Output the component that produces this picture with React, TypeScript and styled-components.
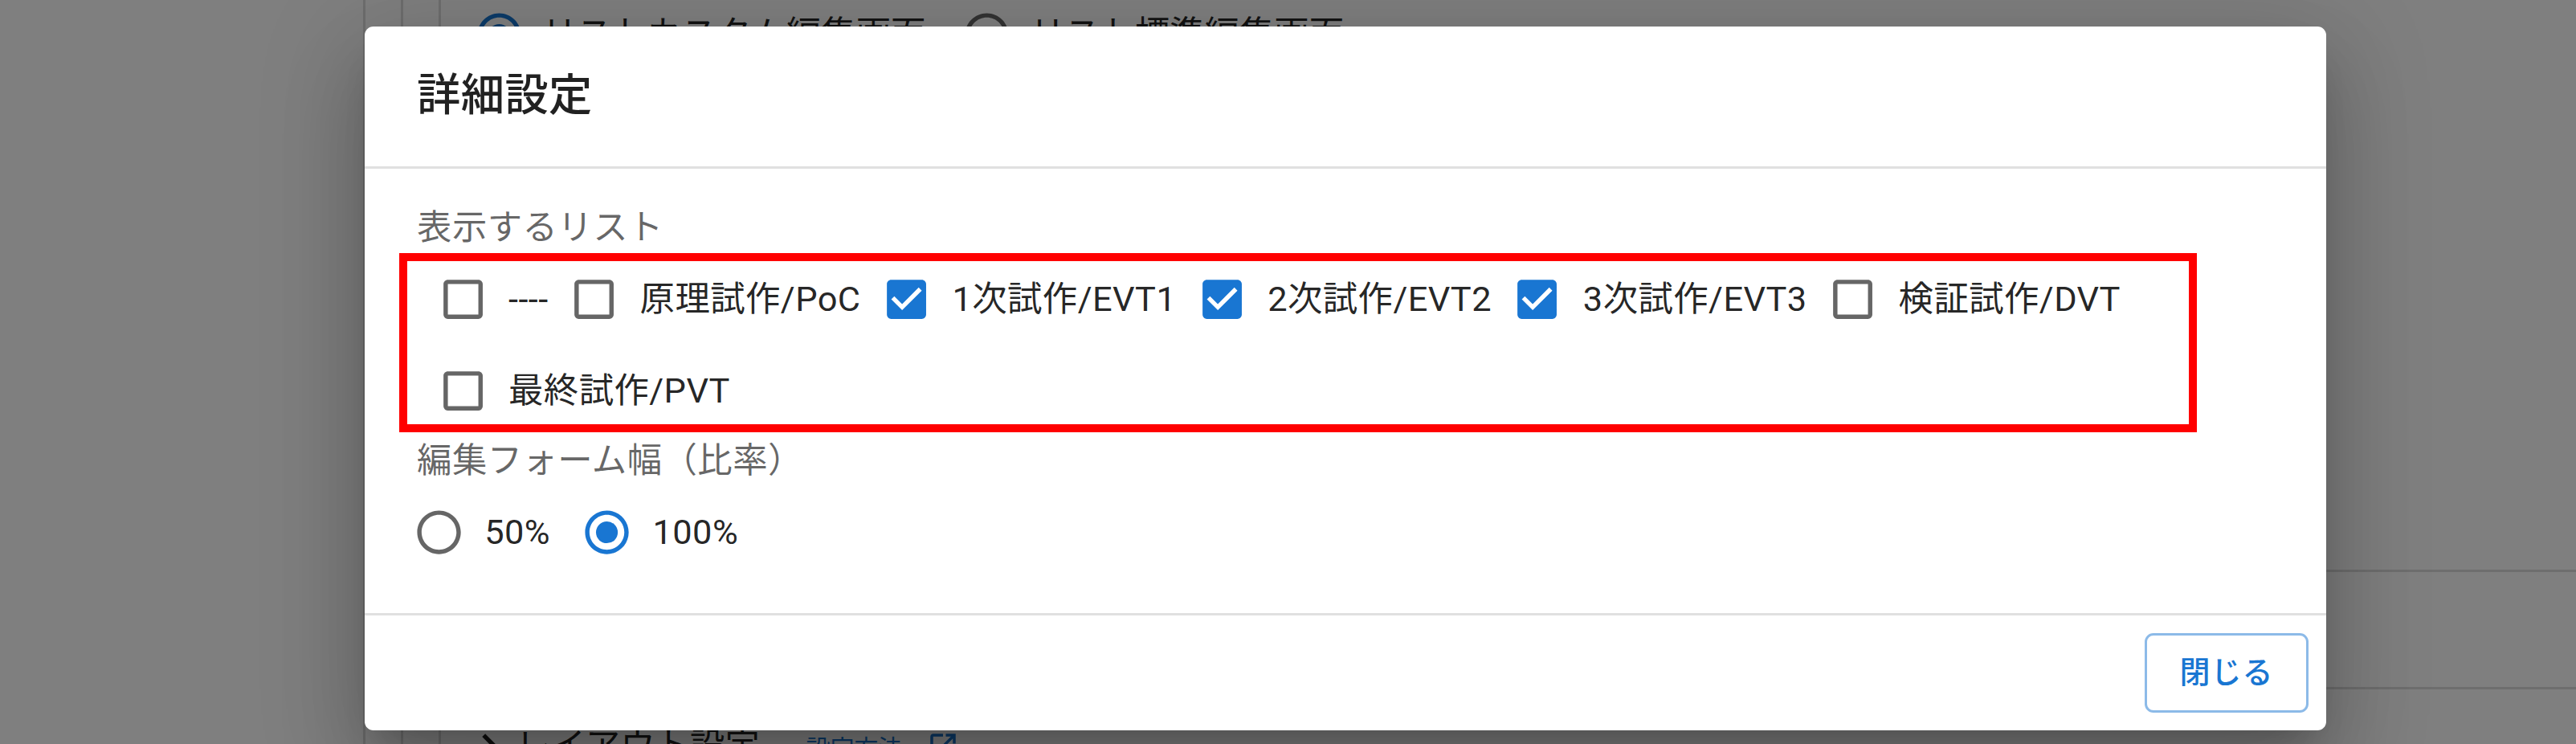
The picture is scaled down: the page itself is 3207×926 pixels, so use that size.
import React from "react";
import styled, { createGlobalStyle } from "styled-components";

const S = 2.713;
const u = (n: number) => `${(n * S).toFixed(2)}px`;

const FONT = `Roboto, "Noto Sans CJK JP", sans-serif`;
const BLUE = "#1976d2";

const GlobalStyle = createGlobalStyle`
  html, body { margin: 0; padding: 0; background: #fff; }
  body { width: 3207px; height: 926px; overflow: hidden; font-family: ${FONT}; }
  * { box-sizing: border-box; }
`;

/* ---------- background page ---------- */
const Page = styled.div`
  position: relative;
  width: 3207px;
  height: 926px;
  overflow: hidden;
  display: flex;
  background: #fff;
  font-family: ${FONT};
  color: rgba(0, 0, 0, 0.87);
`;

const SidePane = styled.div`
  flex: none;
  width: 455px;
  border-right: 3px solid #dcdcdc;
`;

const Guide = styled.div`
  flex: none;
  width: 47px;
  border-right: 3px solid #dcdcdc;
`;

const MainCol = styled.div`
  flex: 1;
  display: flex;
  flex-direction: column;
`;

const TopRow = styled.div`
  flex: none;
  height: 86px;
  display: flex;
  align-items: center;
  padding-left: 45px;
`;

const BgRadio = styled.span`
  display: inline-flex;
  margin-right: 26px;
  svg { width: 65px; height: 65px; display: block; margin: -5px; }
`;

const BgText = styled.span<{ $gap?: number }>`
  font-size: ${u(16)};
  line-height: 1.5;
  margin-right: ${(p) => p.$gap ?? 0}px;
`;

const Section = styled.div<{ $h: number }>`
  flex: none;
  height: ${(p) => p.$h}px;
  border-bottom: 3px solid #dcdcdc;
`;

const BottomRow = styled.div`
  flex: none;
  height: 142px;
  display: flex;
  align-items: center;
  padding-left: 28px;
  svg { display: block; }
`;

const BgHeading = styled.span`
  font-size: ${u(16)};
  line-height: 1.5;
  margin-left: 0px;
  margin-right: 58px;
`;

const BgLink = styled.span`
  font-size: ${u(11)};
  color: ${BLUE};
  margin-right: 30px;
`;

const Backdrop = styled.div`
  position: absolute;
  inset: 0;
  background: rgba(0, 0, 0, 0.5);
`;

/* ---------- dialog ---------- */
const Dialog = styled.div`
  position: absolute;
  left: 454px;
  top: 33px;
  width: 2442px;
  display: flex;
  flex-direction: column;
  background: #fff;
  border-radius: ${u(4)};
  box-shadow: 0 ${u(11)} ${u(15)} ${u(-7)} rgba(0, 0, 0, 0.2),
    0 ${u(24)} ${u(38)} ${u(3)} rgba(0, 0, 0, 0.14),
    0 ${u(9)} ${u(46)} ${u(8)} rgba(0, 0, 0, 0.12);
`;

const Title = styled.h2`
  margin: 0;
  padding: ${u(16)} ${u(24)};
  font-size: ${u(20)};
  font-weight: 500;
  line-height: 1.6;
  letter-spacing: 0.0075em;
  color: rgba(0, 0, 0, 0.87);
`;

const Content = styled.div`
  padding: ${u(16)} ${u(24)};
  border-top: 3px solid #e0e0e0;
  border-bottom: 3px solid #e0e0e0;
  display: flex;
  flex-direction: column;
`;

const FieldLabel = styled.div`
  font-size: ${u(16)};
  line-height: ${u(23)};
  letter-spacing: 0.00938em;
  color: rgba(0, 0, 0, 0.6);
`;

const CheckGroup = styled.div`
  position: relative;
  display: flex;
  flex-wrap: wrap;
  &::after {
    content: "";
    position: absolute;
    top: 0;
    left: -22px;
    right: 96px;
    bottom: 5px;
    border: 10px solid #ff0000;
    pointer-events: none;
  }
`;

const RadioGroup = styled.div`
  display: flex;
  flex-wrap: wrap;
`;

const Option = styled.label<{ $radio?: boolean }>`
  display: inline-flex;
  align-items: center;
  height: ${u(42)};
  margin-left: ${(p) => (p.$radio ? u(-11) : "0px")};
  margin-right: ${(p) => (p.$radio ? u(16) : "0px")};
  cursor: pointer;
`;

const Control = styled.span`
  flex: none;
  display: inline-flex;
  padding: ${u(9)};
  svg {
    width: ${u(24)};
    height: ${u(24)};
    display: block;
  }
`;

const OptionText = styled.span`
  font-size: ${u(16)};
  line-height: 1.5;
  letter-spacing: 0.00938em;
  color: rgba(0, 0, 0, 0.87);
  white-space: nowrap;
`;

const Actions = styled.div`
  display: flex;
  justify-content: flex-end;
  align-items: center;
  padding: ${u(8)};
`;

const CloseButton = styled.button`
  font-family: ${FONT};
  font-size: ${u(14)};
  font-weight: 500;
  line-height: 1.75;
  letter-spacing: 0.02857em;
  padding: ${u(5)} ${u(15)};
  min-width: ${u(64)};
  border: 3px solid rgba(25, 118, 210, 0.5);
  border-radius: ${u(4)};
  color: ${BLUE};
  background: transparent;
  cursor: pointer;
`;

/* ---------- icons ---------- */
const CheckboxIcon = ({ checked }: { checked: boolean }) =>
  checked ? (
    <svg viewBox="0 0 24 24">
      <path
        fill={BLUE}
        d="M19 3H5c-1.11 0-2 .9-2 2v14c0 1.1.89 2 2 2h14c1.1 0 2-.9 2-2V5c0-1.1-.9-2-2-2zm-9 14l-5-5 1.41-1.41L10 14.17l7.59-7.59L19 8l-9 9z"
      />
    </svg>
  ) : (
    <svg viewBox="0 0 24 24">
      <path
        fill="rgba(0,0,0,0.6)"
        d="M19 5v14H5V5h14m0-2H5c-1.1 0-2 .9-2 2v14c0 1.1.9 2 2 2h14c1.1 0 2-.9 2-2V5c0-1.1-.9-2-2-2z"
      />
    </svg>
  );

const RadioIcon = ({ checked }: { checked: boolean }) => (
  <svg viewBox="0 0 24 24">
    <path
      fill={checked ? BLUE : "rgba(0,0,0,0.6)"}
      d="M12 2C6.48 2 2 6.48 2 12s4.48 10 10 10 10-4.48 10-10S17.52 2 12 2zm0 18c-4.42 0-8-3.58-8-8s3.58-8 8-8 8 3.58 8 8-3.58 8-8 8z"
    />
    {checked && <circle cx="12" cy="12" r="5" fill={BLUE} />}
  </svg>
);

const ChevronRight = () => (
  <svg viewBox="0 0 24 24" width="65" height="65">
    <path fill="rgba(0,0,0,0.87)" d="M10 6 8.59 7.41 13.17 12l-4.58 4.59L10 18l6-6z" />
  </svg>
);

const OpenInNew = () => (
  <svg viewBox="0 0 24 24" width="42" height="42">
    <path
      fill={BLUE}
      d="M19 19H5V5h7V3H5c-1.11 0-2 .9-2 2v14c0 1.1.89 2 2 2h14c1.1 0 2-.9 2-2v-7h-2v7zM14 3v2h3.59l-9.83 9.83 1.41 1.41L19 6.41V10h2V3h-7z"
    />
  </svg>
);

const lists = [
  { label: "----", checked: false },
  { label: "原理試作/PoC", checked: false },
  { label: "1次試作/EVT1", checked: true },
  { label: "2次試作/EVT2", checked: true },
  { label: "3次試作/EVT3", checked: true },
  { label: "検証試作/DVT", checked: false },
  { label: "最終試作/PVT", checked: false },
];

const widths = [
  { label: "50%", checked: false },
  { label: "100%", checked: true },
];

export default function App() {
  return (
    <>
      <GlobalStyle />
      <Page>
        <SidePane />
        <Guide />
        <Guide />
        <MainCol>
          <TopRow>
            <BgRadio>
              <RadioIcon checked />
            </BgRadio>
            <BgText $gap={49}>リストカスタム編集画面</BgText>
            <BgRadio>
              <RadioIcon checked={false} />
            </BgRadio>
            <BgText>リスト標準編集画面</BgText>
          </TopRow>
          <Section $h={626} />
          <Section $h={146} />
          <BottomRow>
            <ChevronRight />
            <BgHeading>レイアウト設定</BgHeading>
            <BgLink>設定方法</BgLink>
            <OpenInNew />
          </BottomRow>
        </MainCol>

        <Backdrop />

        <Dialog role="dialog">
          <Title>詳細設定</Title>
          <Content>
            <FieldLabel>表示するリスト</FieldLabel>
            <CheckGroup>
              {lists.map((o) => (
                <Option key={o.label}>
                  <Control>
                    <CheckboxIcon checked={o.checked} />
                  </Control>
                  <OptionText>{o.label}</OptionText>
                </Option>
              ))}
            </CheckGroup>
            <FieldLabel>編集フォーム幅（比率）</FieldLabel>
            <RadioGroup>
              {widths.map((o) => (
                <Option key={o.label} $radio>
                  <Control>
                    <RadioIcon checked={o.checked} />
                  </Control>
                  <OptionText>{o.label}</OptionText>
                </Option>
              ))}
            </RadioGroup>
          </Content>
          <Actions>
            <CloseButton>閉じる</CloseButton>
          </Actions>
        </Dialog>
      </Page>
    </>
  );
}
